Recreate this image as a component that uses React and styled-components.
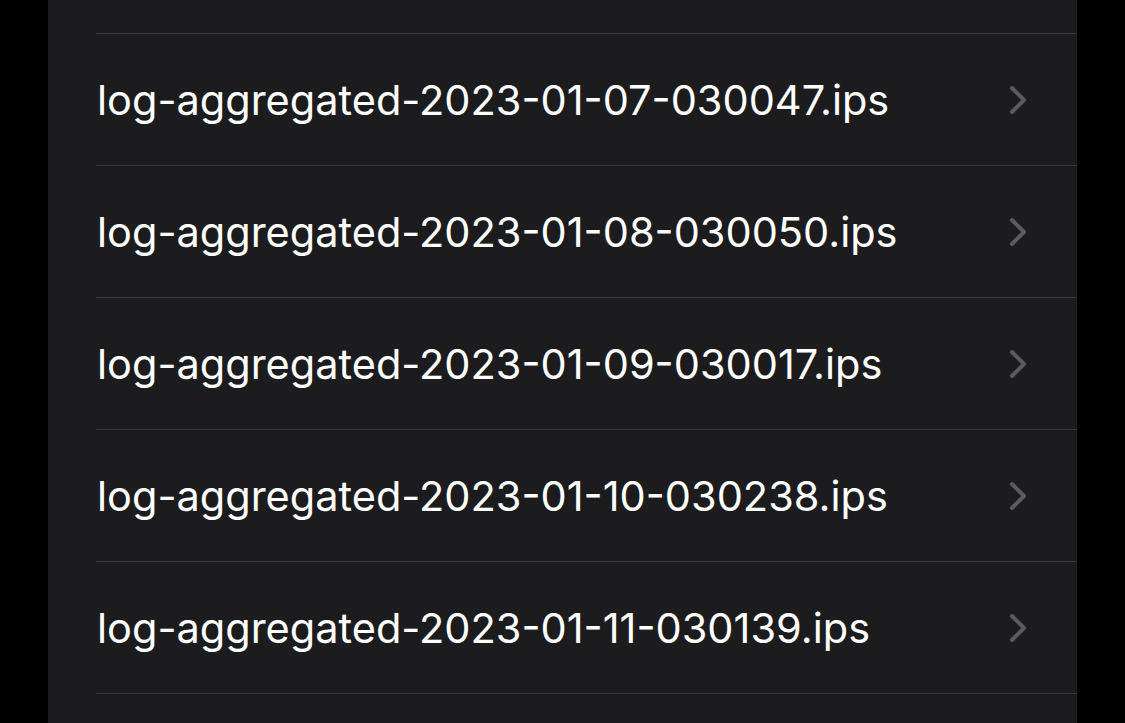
import React from "react";
import styled, { createGlobalStyle } from "styled-components";

const GlobalStyle = createGlobalStyle`
  html, body {
    margin: 0;
    padding: 0;
    background: #000;
    overflow: hidden;
  }
`;

const Screen = styled.div`
  width: 1125px;
  height: 723px;
  background: #000;
  display: flex;
  padding-left: 48px;
  box-sizing: border-box;
  overflow: hidden;
`;

const Panel = styled.div`
  width: 1029px;
  height: 100%;
  background: #1c1c1e;
  padding-top: 33px;
  box-sizing: border-box;
`;

const List = styled.ul`
  list-style: none;
  margin: 0;
  padding: 0 0 0 48px;
`;

const Row = styled.li`
  height: 131px;
  border-top: 1px solid #38383a;
  display: flex;
  align-items: center;
  justify-content: space-between;
  padding-right: 50px;
`;

const Name = styled.span`
  font-family: Inter, "Noto Sans", sans-serif;
  font-size: 41.5px;
  color: #fff;
  padding-left: 1px;
  padding-top: 1px;
`;

const Chevron = () => (
  <svg width="18" height="30" viewBox="0 0 18 30" fill="none">
    <path
      d="M3 3 L15 15 L3 27"
      stroke="#5b5b5f"
      strokeWidth="4"
      strokeLinecap="round"
      strokeLinejoin="round"
    />
  </svg>
);

const files = [
  "log-aggregated-2023-01-07-030047.ips",
  "log-aggregated-2023-01-08-030050.ips",
  "log-aggregated-2023-01-09-030017.ips",
  "log-aggregated-2023-01-10-030238.ips",
  "log-aggregated-2023-01-11-030139.ips",
  "",
];

const App = () => (
  <Screen>
    <GlobalStyle />
    <Panel>
      <List>
        {files.map((f, i) => (
          <Row key={i}>
            <Name>{f}</Name>
            {f && <Chevron />}
          </Row>
        ))}
      </List>
    </Panel>
  </Screen>
);

export default App;
